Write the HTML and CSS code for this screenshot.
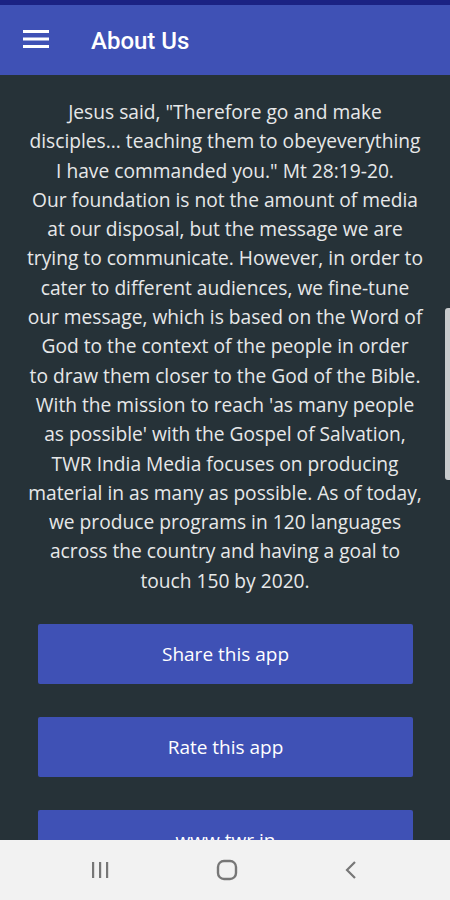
FILE: index.html
```html
<html>
    <head>
        <link rel="stylesheet" href="styles.css">
    </head>
    <body>
        <div class="screen">
            <div class="statusbar"></div>
            <div class="toolbar">
                <svg class="menu_icon" width="26" height="18" viewBox="0 0 26 18">
                    <rect x="0" y="0" width="26" height="3" fill="#fff" />
                    <rect x="0" y="7.5" width="26" height="3" fill="#fff" />
                    <rect x="0" y="15" width="26" height="3" fill="#fff" />
                </svg>
                <span class="title">About Us</span>
            </div>
            <div class="content">
                <p class="about">
                    Jesus said, "Therefore go and make<br />
                    disciples... teaching them to obeyeverything<br />
                    I have commanded you." Mt 28:19-20.<br />
                    Our foundation is not the amount of media<br />
                    at our disposal, but the message we are<br />
                    trying to communicate. However, in order to<br />
                    cater to different audiences, we fine-tune<br />
                    our message, which is based on the Word of<br />
                    God to the context of the people in order<br />
                    to draw them closer to the God of the Bible.<br />
                    With the mission to reach 'as many people<br />
                    as possible' with the Gospel of Salvation,<br />
                    TWR India Media focuses on producing<br />
                    material in as many as possible. As of today,<br />
                    we produce programs in 120 languages<br />
                    across the country and having a goal to<br />
                    touch 150 by 2020.
                </p>
                <div class="buttons">
                    <a class="button" href="#">Share this app</a>
                    <a class="button" href="#">Rate this app</a>
                    <a class="button" href="#">www.twr.in</a>
                </div>
                <div class="scrollbar"></div>
            </div>
            <div class="navbar">
                <svg width="20" height="18" viewBox="0 0 20 18">
                    <rect x="2" y="1" width="2.2" height="16" fill="#777" />
                    <rect x="9" y="1" width="2.2" height="16" fill="#777" />
                    <rect x="16" y="1" width="2.2" height="16" fill="#777" />
                </svg>
                <svg width="22" height="22" viewBox="0 0 22 22">
                    <rect x="2" y="2" width="18" height="18" rx="6" fill="none" stroke="#777" stroke-width="2.4" />
                </svg>
                <svg width="14" height="20" viewBox="0 0 14 20">
                    <path d="M11 2 L3 10 L11 18" fill="none" stroke="#777" stroke-width="2.2" />
                </svg>
            </div>
        </div>
    </body>
</html>
```

FILE: styles.css
```css
body
{
    margin:0;
    font-family:"Open Sans","DejaVu Sans",sans-serif;
    background:#263238;
}
.screen
{
    width:450px;
    height:900px;
    display:flex;
    flex-direction:column;
    overflow:hidden;
}
.statusbar
{
    height:5px;
    background:#1b2283;
}
.toolbar
{
    height:70px;
    background:#3f51b5;
    display:flex;
    align-items:center;
    padding-left:23px;
}
.menu_icon
{
    margin-right:42px;
    margin-top:-2px;
}
.title
{
    color:#fff;
    font-family:Roboto,"Liberation Sans",sans-serif;
    font-weight:500;
    font-size:24px;
    margin-top:1px;
}
.content
{
    flex:1;
    position:relative;
    overflow:hidden;
    background:#263238;
}
.about
{
    margin:22px 0 0 0;
    color:#e6e8e9;
    font-size:19.2px;
    line-height:29.3px;
    text-align:center;
    white-space:nowrap;
}
.buttons
{
    display:flex;
    flex-direction:column;
    gap:33px;
    margin:29px 37px 0 38px;
}
.button
{
    display:block;
    height:60px;
    line-height:60px;
    background:#3f51b5;
    color:#fff;
    text-align:center;
    text-decoration:none;
    font-size:19px;
    border-radius:2px;
}
.scrollbar
{
    position:absolute;
    right:0;
    top:233px;
    width:5px;
    height:172px;
    background:#c8cbcd;
    border-radius:3px 0 0 3px;
}
.navbar
{
    height:60px;
    background:#f2f2f2;
    display:flex;
    align-items:center;
    justify-content:space-between;
    padding:0 92px 0 90px;
}
```
